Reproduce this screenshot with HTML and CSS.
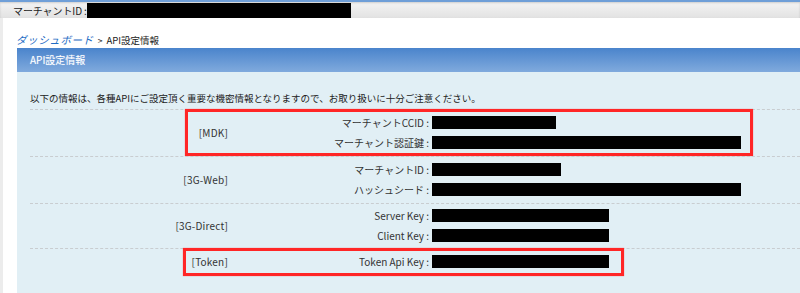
FILE: index.html
```html
<!DOCTYPE html>
<html lang="ja">
<head>
<meta charset="utf-8">
<title>API設定情報</title>
<link rel="stylesheet" href="styles.css">
</head>
<body>
<header class="topbar">
  <span class="top-label">マーチャントID :</span>
  <span class="mask mask-top"></span>
</header>
<main class="main">
  <nav class="crumbs"><a href="#" class="crumb-link">ダッシュボード</a><span class="crumb-sep">&gt;</span><span class="crumb-cur">API設定情報</span></nav>
  <section class="panel">
    <h1 class="panel-head">API設定情報</h1>
    <div class="panel-body">
      <p class="intro">以下の情報は、各種APIにご設定頂く重要な機密情報となりますので、お取り扱いに十分ご注意ください。</p>
      <div class="group">
        <div class="group-name">[MDK]</div>
        <div class="fields">
          <div class="field"><span class="flabel">マーチャントCCID :</span><span class="mask w124"></span></div>
          <div class="field"><span class="flabel">マーチャント認証鍵 :</span><span class="mask w309"></span></div>
        </div>
        <div class="mark mark-mdk"></div>
      </div>
      <div class="group">
        <div class="group-name">[3G-Web]</div>
        <div class="fields">
          <div class="field"><span class="flabel">マーチャントID :</span><span class="mask w129"></span></div>
          <div class="field"><span class="flabel">ハッシュシード :</span><span class="mask w309"></span></div>
        </div>
      </div>
      <div class="group group-tight">
        <div class="group-name">[3G-Direct]</div>
        <div class="fields">
          <div class="field"><span class="flabel">Server Key :</span><span class="mask w177"></span></div>
          <div class="field"><span class="flabel">Client Key :</span><span class="mask w177"></span></div>
        </div>
      </div>
      <div class="group group-last">
        <div class="group-name">[Token]</div>
        <div class="fields">
          <div class="field"><span class="flabel">Token Api Key :</span><span class="mask w177"></span></div>
        </div>
        <div class="mark mark-token"></div>
      </div>
    </div>
  </section>
</main>
</body>
</html>
```

FILE: styles.css
```css
html, body {
  margin: 0;
  padding: 0;
}
body {
  background: #ececec;
  font-family: "Noto Sans CJK JP", "Noto Sans", sans-serif;
  color: #333;
  width: 800px;
  height: 293px;
  overflow: hidden;
}
.topbar {
  height: 16px;
  border-top: 2px solid #6f9fd8;
  background: linear-gradient(#f4f4f4, #e2e2e2);
  display: flex;
  align-items: center;
  padding-left: 13px;
  box-shadow: inset 0 1px 2px rgba(0,0,0,0.15);
}
.top-label {
  font-size: 10px;
  color: #222;
  letter-spacing: -0.1px;
  margin-right: 0;
  white-space: pre;
}
.mask {
  display: inline-block;
  background: #000;
  height: 13px;
}
.mask-top {
  width: 264px;
  height: 15px;
  margin-top: 1px;
}
.main {
  box-sizing: border-box;
  margin-left: 3px;
  background: #fff;
  height: 275px;
  overflow: hidden;
  padding-top: 15px;
  padding-left: 14px;
}
.crumbs {
  display: flex;
  align-items: baseline;
  font-size: 10px;
  line-height: 14px;
  height: 14px;
  margin-bottom: 1px;
  margin-left: -1px;
  white-space: pre;
}
.crumb-link {
  color: #1f6cc4;
  text-decoration: none;
  font-size: 10.5px;
  font-style: italic;
  letter-spacing: 0.6px;
}
.crumb-sep {
  color: #222;
  font-size: 8.5px;
  margin: 0 4px 0 4px;
}
.crumb-cur {
  color: #222;
  font-size: 9.5px;
}
.panel {
  margin: 0;
}
.panel-head {
  margin: 0;
  height: 24px;
  line-height: 24px;
  padding-left: 13px;
  font-size: 10px;
  font-weight: normal;
  color: #fff;
  background: linear-gradient(#4a84cc, #80aadd);
  text-shadow: 0 0 1px rgba(255,255,255,0.4);
}
.panel-body {
  background: #e1eff5;
  padding: 19px 0 30px 13px;
}
.intro {
  margin: 0 0 4px 0;
  font-size: 9.5px;
  line-height: 14px;
  color: #222;
}
.group {
  position: relative;
  display: flex;
  align-items: center;
  border-top: 1px dashed #c9cdd0;
  padding: 2px 0 3px 0;
}
.group-tight {
  padding: 1px 0 2px 0;
}
.group-name {
  width: 198px;
  text-align: right;
  font-size: 10px;
  color: #333;
  letter-spacing: 0.2px;
}
.fields {
  display: flex;
  flex-direction: column;
}
.field {
  display: flex;
  align-items: center;
  height: 20.5px;
}
.flabel {
  width: 201px;
  padding-right: 3px;
  text-align: right;
  font-size: 10px;
  color: #333;
  white-space: pre;
}
.w124 { width: 124px; }
.w129 { width: 129px; }
.w177 { width: 177px; }
.w309 { width: 309px; }
.mark {
  position: absolute;
  border: 3px solid #ff2626;
  box-sizing: border-box;
  box-shadow: 0 0 1px rgba(255,38,38,0.6);
}
.mark-mdk {
  left: 155px;
  top: -1px;
  width: 568px;
  height: 47px;
}
.mark-token {
  left: 153px;
  top: -1px;
  width: 441px;
  height: 28px;
}
.group-last {
  padding-bottom: 4px;
}
```
